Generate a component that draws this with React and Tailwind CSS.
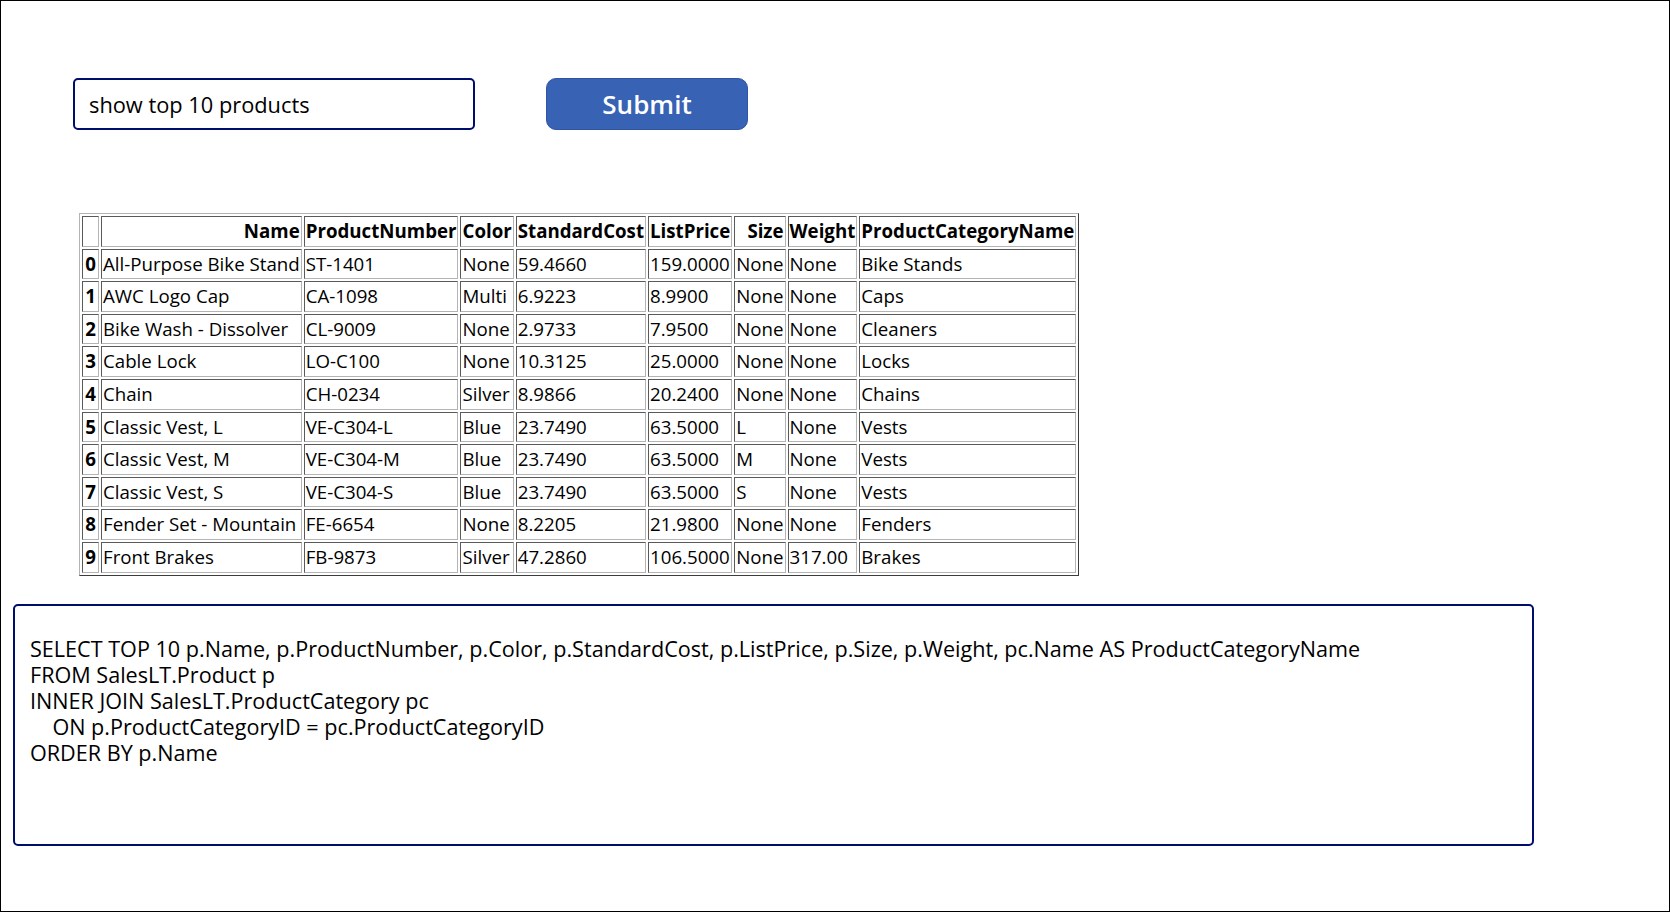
import React, { useState } from 'react';

const columns = ['Name', 'ProductNumber', 'Color', 'StandardCost', 'ListPrice', 'Size', 'Weight', 'ProductCategoryName'];

const rows = [
  ['All-Purpose Bike Stand', 'ST-1401', 'None', '59.4660', '159.0000', 'None', 'None', 'Bike Stands'],
  ['AWC Logo Cap', 'CA-1098', 'Multi', '6.9223', '8.9900', 'None', 'None', 'Caps'],
  ['Bike Wash - Dissolver', 'CL-9009', 'None', '2.9733', '7.9500', 'None', 'None', 'Cleaners'],
  ['Cable Lock', 'LO-C100', 'None', '10.3125', '25.0000', 'None', 'None', 'Locks'],
  ['Chain', 'CH-0234', 'Silver', '8.9866', '20.2400', 'None', 'None', 'Chains'],
  ['Classic Vest, L', 'VE-C304-L', 'Blue', '23.7490', '63.5000', 'L', 'None', 'Vests'],
  ['Classic Vest, M', 'VE-C304-M', 'Blue', '23.7490', '63.5000', 'M', 'None', 'Vests'],
  ['Classic Vest, S', 'VE-C304-S', 'Blue', '23.7490', '63.5000', 'S', 'None', 'Vests'],
  ['Fender Set - Mountain', 'FE-6654', 'None', '8.2205', '21.9800', 'None', 'None', 'Fenders'],
  ['Front Brakes', 'FB-9873', 'Silver', '47.2860', '106.5000', 'None', '317.00', 'Brakes'],
];

const sql = `SELECT TOP 10 p.Name, p.ProductNumber, p.Color, p.StandardCost, p.ListPrice, p.Size, p.Weight, pc.Name AS ProductCategoryName
FROM SalesLT.Product p
INNER JOIN SalesLT.ProductCategory pc
    ON p.ProductCategoryID = pc.ProductCategoryID
ORDER BY p.Name`;

// inset look of the old border="1" table cells
const cell = 'p-px border border-t-[#5a5a5a] border-l-[#5a5a5a] border-r-[#b4b4b4] border-b-[#b4b4b4]';

const App = () => {
  const [query, setQuery] = useState('show top 10 products');

  return (
    <div className="w-[1670px] h-[912px] border border-black bg-white flex flex-col font-['Open_Sans',sans-serif] text-black overflow-hidden">
      {/* Prompt row */}
      <div className="flex items-center pt-[77px] pl-[72px] gap-[71px]">
        <input
          value={query}
          onChange={(e) => setQuery(e.target.value)}
          className="w-[402px] h-[52px] border-2 border-[#000d6b] rounded-[5px] pl-[14px] pr-3 text-[21.8px] text-black bg-white outline-none"
        />
        <button className="w-[202px] h-[52px] rounded-[10px] bg-[#3862b4] border border-[#2f55a3] text-white text-[26px] font-semibold leading-none">
          Submit
        </button>
      </div>

      {/* Result table */}
      <div className="mt-[83px] ml-[78px] flex">
        <table className="border-separate border-spacing-[2px] border border-t-[#b4b4b4] border-l-[#b4b4b4] border-r-[#3c3c3c] border-b-[#3c3c3c] text-[18.7px] leading-[26.6px]">
          <thead>
            <tr className="text-right">
              <th className={`${cell} w-[17px]`}></th>
              {columns.map((c) => (
                <th key={c} className={`${cell} font-bold text-[18.7px] whitespace-nowrap`}>{c}</th>
              ))}
            </tr>
          </thead>
          <tbody>
            {rows.map((r, i) => (
              <tr key={i}>
                <th className={`${cell} w-[17px] font-bold text-center`}>{i}</th>
                {r.map((v, j) => (
                  <td key={j} className={`${cell} font-normal text-left whitespace-nowrap`}>{v}</td>
                ))}
              </tr>
            ))}
          </tbody>
        </table>
      </div>

      {/* Generated SQL */}
      <div className="mt-[28px] ml-[12px] w-[1521px] h-[242px] border-2 border-[#000d6b] rounded-[5px] pt-[30px] pl-[15px] text-[21.6px] leading-[26px] whitespace-pre">
        {sql}
      </div>
    </div>
  );
};

export default App;
